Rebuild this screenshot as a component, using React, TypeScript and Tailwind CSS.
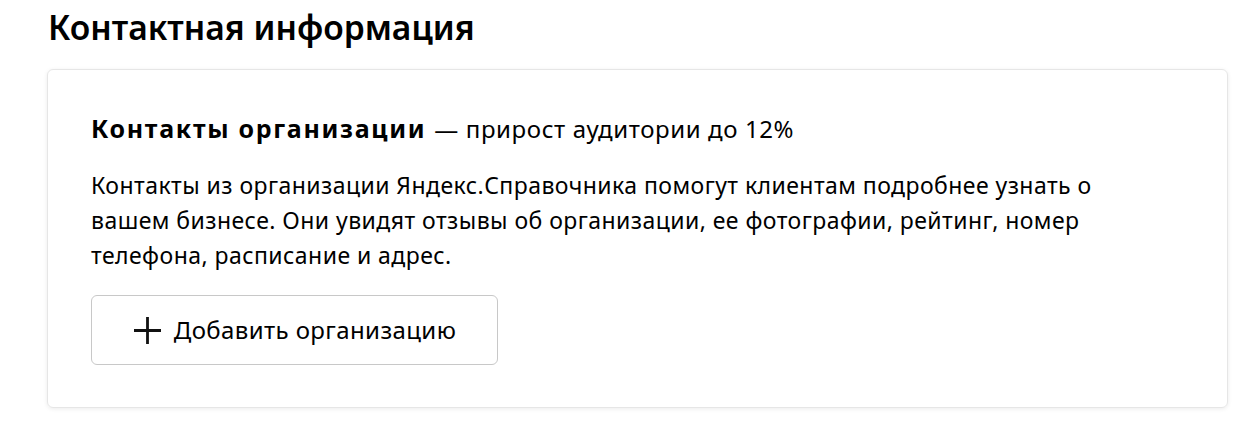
import React from 'react';

export default function App() {
  return (
    <div className="min-h-screen bg-white text-black" style={{ fontFamily: '"Noto Sans", sans-serif' }}>
      <div className="pl-[47px] pr-2 pt-[7px]">
        {/* Section title */}
        <h1 className="text-[33.6px] font-semibold leading-[40px] ml-[1px] mb-[22px]">Контактная информация</h1>

        {/* Card */}
        <div className="w-[1181px] h-[339px] rounded-[6px] border border-[#e6e6e6] shadow-[0_1px_4px_rgba(0,0,0,0.08)] px-[43px] pt-[42px]">
          <div className="flex items-baseline">
            <h2 className="text-[25px] font-bold leading-[32px] tracking-[1.7px]">Контакты организации</h2>
            <span className="ml-[8px] text-[24px] leading-[32px] tracking-[0.6px]">— прирост аудитории до 12%</span>
          </div>

          <p className="mt-[23px] max-w-[1025px] text-[23px] leading-[35px] tracking-[0.45px]">
            Контакты из организации Яндекс.Справочника помогут клиентам подробнее узнать о вашем бизнесе. Они увидят отзывы об организации, ее фотографии, рейтинг, номер телефона, расписание и адрес.
          </p>

          <button className="mt-[22px] w-[407px] h-[70px] rounded-[6px] border border-[#c8c8c8] flex items-center justify-center gap-[12px] bg-white">
            <svg width="29" height="29" viewBox="0 0 29 29" fill="none">
              <path d="M14.5 1v27M1 14.5h27" stroke="#111" strokeWidth="2.8" />
            </svg>
            <span className="text-[24px] leading-none tracking-[0.4px]">Добавить организацию</span>
          </button>
        </div>
      </div>
    </div>
  );
}
